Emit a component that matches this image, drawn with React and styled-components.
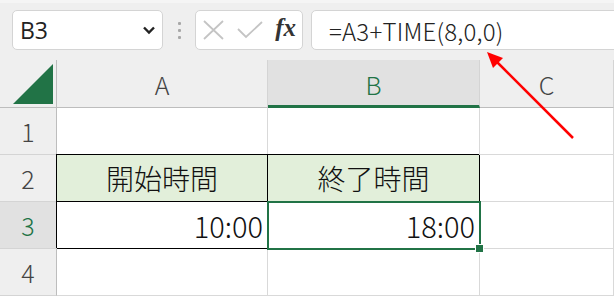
import React from "react";
import styled, { createGlobalStyle } from "styled-components";

const GREEN = "#217346";

const Global = createGlobalStyle`
  html, body {
    margin: 0;
    padding: 0;
    width: 614px;
    height: 296px;
    overflow: hidden;
    background: #ffffff;
  }
`;

const Page = styled.div`
  position: relative;
  width: 614px;
  height: 296px;
  overflow: hidden;
  font-family: "Noto Sans CJK JP", "Noto Sans", sans-serif;
  font-weight: 300;
`;

const Toolbar = styled.div`
  height: 60px;
  box-sizing: border-box;
  padding: 7px 0 10px 12px;
  background: #efefef;
  border-top: 3px solid #f5f5f5;
  display: flex;
  align-items: stretch;
`;

const Box = styled.div`
  box-sizing: border-box;
  height: 40px;
  background: #ffffff;
  border: 1px solid #d4d4d4;
  border-radius: 5px;
  display: flex;
  align-items: center;
`;

const NameBox = styled(Box)`
  width: 151px;
  padding: 0 6px 0 7px;
  justify-content: space-between;
  font-family: "Open Sans", "Noto Sans", sans-serif;
  font-weight: 400;
  font-size: 23px;
  color: #222;
`;

const Grip = styled.div`
  width: 32px;
  display: flex;
  flex-direction: column;
  align-items: center;
  justify-content: center;
  gap: 4px;
  span {
    width: 3px;
    height: 3px;
    background: #a8a8a8;
    border-radius: 1px;
  }
`;

const FnBox = styled(Box)`
  width: 108px;
  padding: 0 6px 0 7px;
  justify-content: space-between;
`;

const Fx = styled.span`
  font-family: "Liberation Serif", serif;
  font-style: italic;
  font-weight: bold;
  font-size: 25px;
  color: #333;
  margin-top: -4px;
`;

const FormulaBox = styled(Box)`
  flex: 1;
  margin-left: 8px;
  margin-right: -20px;
  padding-left: 17px;
  font-size: 24px;
  letter-spacing: 0.2px;
  color: #222;
`;

const Sheet = styled.div`
  display: grid;
  grid-template-columns: 57px 211px 212px 1fr;
  grid-template-rows: 48px repeat(4, 47px);
  background: #ffffff;
`;

const Cell = styled.div`
  position: relative;
  box-sizing: border-box;
  border-right: 1px solid ${(p) => (p.$table ? "#000" : "#d9d9d9")};
  border-bottom: 1px solid ${(p) => (p.$table ? "#000" : "#d9d9d9")};
  box-shadow: ${(p) => (p.$table ? "-1px -1px 0 0 #000" : "none")};
  background: ${(p) => (p.$fill ? "#e2efda" : "#ffffff")};
  display: flex;
  align-items: center;
  justify-content: ${(p) => (p.$right ? "flex-end" : "center")};
  padding-right: ${(p) => (p.$right ? "4px" : "0")};
  font-size: ${(p) => (p.$right ? "29px" : "28px")};
  color: #111;
  ${(p) =>
    p.$selected &&
    `
    outline: 2px solid ${GREEN};
    outline-offset: -1px;
    z-index: 2;
    &::after {
      content: "";
      position: absolute;
      right: -5px;
      bottom: -5px;
      width: 7px;
      height: 7px;
      background: ${GREEN};
      border: 1px solid #fff;
    }
  `}
`;

const ColHead = styled.div`
  box-sizing: border-box;
  background: ${(p) => (p.$active ? "#e1e1e1" : "#efefef")};
  border-right: 1px solid #d4d4d4;
  border-bottom: ${(p) => (p.$active ? `3px solid ${GREEN}` : "1px solid #bdbdbd")};
  padding-top: ${(p) => (p.$active ? "2px" : "0")};
  display: flex;
  align-items: center;
  justify-content: center;
  font-size: 25px;
  color: ${(p) => (p.$active ? GREEN : "#444")};
`;

const RowHead = styled.div`
  box-sizing: border-box;
  background: ${(p) => (p.$active ? "#e1e1e1" : "#efefef")};
  border-right: 1px solid #bdbdbd;
  border-bottom: 1px solid #d4d4d4;
  display: flex;
  align-items: center;
  justify-content: center;
  font-size: 25px;
  color: ${(p) => (p.$active ? GREEN : "#444")};
`;

const Corner = styled.div`
  box-sizing: border-box;
  background: #efefef;
  border-right: 1px solid #bdbdbd;
  border-bottom: 1px solid #bdbdbd;
  display: flex;
  align-items: flex-end;
  justify-content: flex-end;
  padding: 0 3px 3px 0;
`;

const Arrow = styled.svg`
  position: absolute;
  left: 0;
  top: 0;
  pointer-events: none;
  z-index: 5;
`;

const Chevron = () => (
  <svg width="14" height="10" viewBox="0 0 14 10">
    <path d="M2 2.5 L7 7.5 L12 2.5" fill="none" stroke="#222" strokeWidth="2.4" />
  </svg>
);

const Cross = () => (
  <svg width="21" height="20" viewBox="0 0 21 20">
    <path d="M1 1 L20 19 M20 1 L1 19" stroke="#c4c4c4" strokeWidth="1.8" />
  </svg>
);

const Check = () => (
  <svg width="26" height="18" viewBox="0 0 26 18">
    <path d="M1 8 L9 16 L25 1" fill="none" stroke="#c4c4c4" strokeWidth="1.8" />
  </svg>
);

export default function App() {
  return (
    <Page>
      <Global />
      <Toolbar>
        <NameBox>
          <span>B3</span>
          <Chevron />
        </NameBox>
        <Grip>
          <span />
          <span />
          <span />
        </Grip>
        <FnBox>
          <Cross />
          <Check />
          <Fx>fx</Fx>
        </FnBox>
        <FormulaBox>=A3+TIME(8,0,0)</FormulaBox>
      </Toolbar>
      <Sheet>
        <Corner>
          <svg width="40" height="40" viewBox="0 0 40 40">
            <path d="M40 0 L40 40 L0 40 Z" fill={GREEN} />
          </svg>
        </Corner>
        <ColHead>A</ColHead>
        <ColHead $active>B</ColHead>
        <ColHead>C</ColHead>

        <RowHead>1</RowHead>
        <Cell />
        <Cell />
        <Cell />

        <RowHead>2</RowHead>
        <Cell $table $fill>開始時間</Cell>
        <Cell $table $fill>終了時間</Cell>
        <Cell />

        <RowHead $active>3</RowHead>
        <Cell $table $right>10:00</Cell>
        <Cell $table $right $selected>18:00</Cell>
        <Cell />

        <RowHead>4</RowHead>
        <Cell />
        <Cell />
        <Cell />
      </Sheet>
      <Arrow width="614" height="296" viewBox="0 0 614 296">
        <line x1="573" y1="138" x2="495" y2="60" stroke="#ff0000" strokeWidth="2.5" />
        <path d="M487 52 L503 58 L493 68 Z" fill="#ff0000" />
      </Arrow>
    </Page>
  );
}
